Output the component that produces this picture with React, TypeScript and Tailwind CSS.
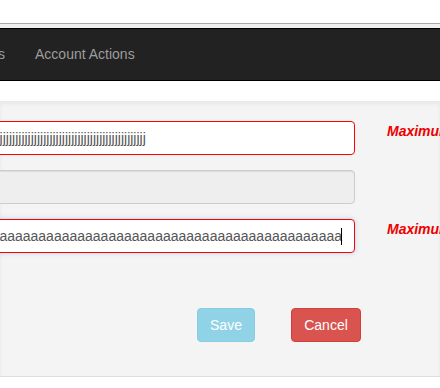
import React from 'react';

const font = { fontFamily: '"Liberation Sans", Arial, sans-serif' };

const J_TEXT = 'j'.repeat(107);
const A_TEXT = 'a'.repeat(120);

function Message() {
    return (
        <span className="ml-[32px] shrink-0 whitespace-nowrap text-[14px] leading-[20px] font-bold italic text-[#ee0000]">
            Maximum length exceeded
        </span>
    );
}

export default function App() {
    return (
        <div className="w-[440px] h-[388px] overflow-hidden bg-white" style={font}>
            <div className="h-[23px] bg-white" />
            <div className="h-[5px] border-t border-[#a9a9a9] bg-[#f0f0f0]" />

            {/* Navbar */}
            <nav className="h-[53px] border-y border-black bg-[#222] flex items-center text-[14px] text-[#9d9d9d] whitespace-nowrap">
                <span className="-ml-[59px] px-[15px] shrink-0">Reports</span>
                <span className="px-[15px] shrink-0">Account Actions</span>
            </nav>

            <div className="h-[20px] bg-white" />

            {/* Form panel */}
            <div className="h-[276px] border-b border-[#ddd] bg-[#f4f4f4] shadow-[inset_0_3px_4px_rgba(0,0,0,0.05)] pt-[20px]">
                <div className="-ml-[200px] flex flex-col gap-[15px]">
                    <div className="flex items-start">
                        <div className="w-[555px] shrink-0 h-[34px] rounded-[4px] border border-[#f00] bg-white px-[12px] flex items-center overflow-hidden text-[14px] text-[#555] whitespace-nowrap">
                            {J_TEXT}
                        </div>
                        <Message />
                    </div>
                    <div className="flex items-start">
                        <div className="w-[555px] shrink-0 h-[34px] rounded-[4px] border border-[#ccc] bg-[#eee] shadow-[inset_0_1px_1px_rgba(0,0,0,0.075)]" />
                    </div>
                    <div className="flex items-start">
                        <div className="w-[555px] shrink-0 h-[34px] rounded-[4px] border border-[#f00] bg-white px-[12px] flex items-center justify-end overflow-hidden text-[14px] text-[#555] whitespace-nowrap shadow-[0_0_5px_rgba(102,175,233,0.45)]">
                            <span className="shrink-0">{A_TEXT}</span>
                            <span className="inline-block shrink-0 w-px h-[17px] bg-black -ml-px" />
                        </div>
                        <Message />
                    </div>
                </div>

                <div className="mt-[55px] ml-[197px] flex gap-[36px] text-[14px] text-white">
                    <button className="w-[58px] h-[34px] rounded-[4px] border border-[#86cde2] bg-[#91d3e6]">
                        Save
                    </button>
                    <button className="w-[70px] h-[34px] rounded-[4px] border border-[#d43f3a] bg-[#d9534f]">
                        Cancel
                    </button>
                </div>
            </div>
        </div>
    );
}
